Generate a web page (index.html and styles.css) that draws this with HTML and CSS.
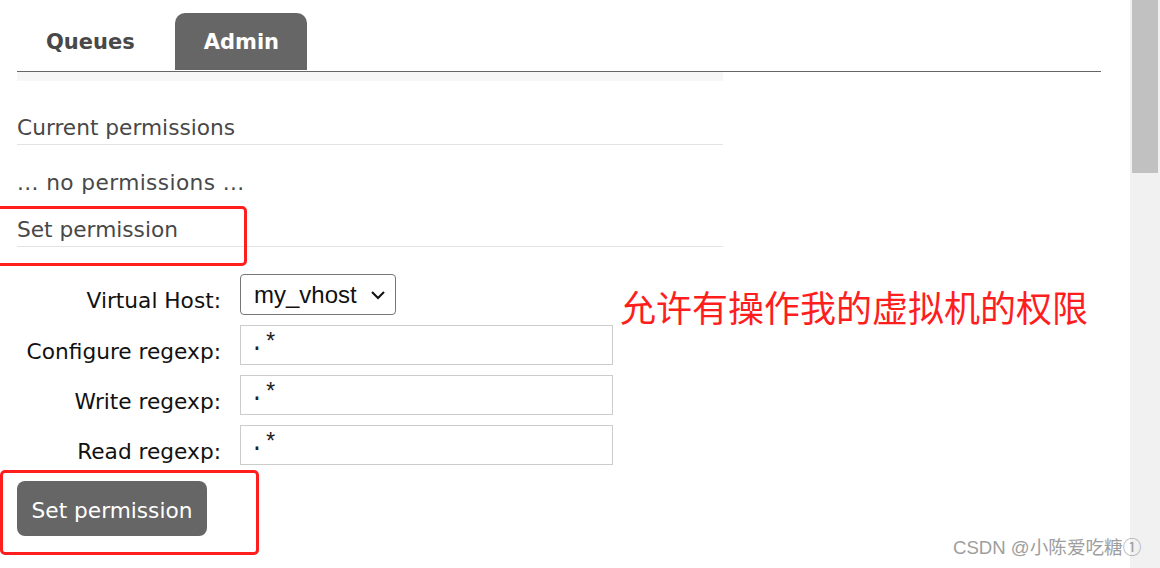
FILE: index.html
```html
<!DOCTYPE html>
<html lang="en">
<head>
    <meta charset="UTF-8">
    <title>RabbitMQ - User permissions</title>
    <link rel="stylesheet" href="styles.css">
</head>
<body>
    <div class="window">
        <div class="main">
            <ul class="tabs">
                <li class="tab">Queues</li>
                <li class="tab active">Admin</li>
            </ul>
            <div class="band"></div>

            <div class="section">
                <h2>Current permissions</h2>
                <p class="empty">... no permissions ...</p>

                <h2>Set permission</h2>
                <form class="perm-form" onsubmit="return false;">
                    <label for="vhost">Virtual Host:</label>
                    <span class="select-wrap">
                        <select id="vhost" name="vhost">
                            <option>my_vhost</option>
                        </select>
                        <svg class="chevron" width="16" height="10" viewBox="0 0 16 10" fill="none">
                            <path d="M2 2L8 8L14 2" stroke="#111" stroke-width="2"/>
                        </svg>
                    </span>

                    <label for="configure">Configure regexp:</label>
                    <input type="text" id="configure" value=".*">

                    <label for="write">Write regexp:</label>
                    <input type="text" id="write" value=".*">

                    <label for="read">Read regexp:</label>
                    <input type="text" id="read" value=".*">
                </form>
                <button class="btn" type="button">Set permission</button>
            </div>

            <!-- annotations drawn over the screenshot -->
            <div class="mark mark-heading"></div>
            <div class="mark mark-button"></div>
            <div class="note">允许有操作我的虚拟机的权限</div>
        </div>
        <div class="scrollbar">
            <div class="thumb"></div>
        </div>
        <div class="watermark">CSDN @小陈爱吃糖①</div>
    </div>
</body>
</html>
```

FILE: styles.css
```css
html, body {
    margin: 0;
    padding: 0;
    background: #fff;
}
body {
    font-family: "DejaVu Sans", Verdana, sans-serif;
    color: #484848;
    overflow: hidden;
}
.window {
    position: relative;
    display: flex;
    width: 1160px;
    height: 568px;
}
.main {
    position: relative;
    flex: 1;
    padding: 0 29px 0 17px;
    overflow: hidden;
}
.scrollbar {
    width: 30px;
    background: #f1f1f1;
    padding: 0 2px;
    box-sizing: border-box;
}
.thumb {
    height: 173px;
    background: #c1c1c1;
}

/* tabs */
.tabs {
    display: flex;
    gap: 12px;
    list-style: none;
    margin: 13px 0 0 0;
    padding: 0;
    height: 58px;
    border-bottom: 1px solid #666;
    box-sizing: content-box;
}
.tab {
    height: 57px;
    line-height: 58px;
    padding: 0 28px 0 29px;
    font-size: 21px;
    font-weight: bold;
    color: #484848;
    border-radius: 10px 10px 0 0;
}
.tab.active {
    background: #666;
    color: #fff;
}
.band {
    width: 706px;
    height: 9px;
    background: #f7f7f7;
}

/* content */
.section {
    width: 706px;
}
h2 {
    margin: 33px 0 0 0;
    padding-bottom: 2px;
    font-size: 21.7px;
    font-weight: normal;
    line-height: 28px;
    color: #484848;
    border-bottom: 1px solid #e3e3e3;
}
.empty {
    margin: 24px 0 0 0;
    font-size: 21.7px;
    letter-spacing: 0.4px;
    line-height: 28px;
}
.empty + h2 {
    margin-top: 19px;
}
.perm-form {
    display: grid;
    grid-template-columns: 204px auto;
    column-gap: 19px;
    row-gap: 10px;
    align-items: center;
    justify-items: start;
    margin-top: 27px;
}
.perm-form label {
    justify-self: end;
    font-size: 21.7px;
    color: #111;
    padding-top: 12px;
}
.select-wrap {
    position: relative;
    display: inline-block;
}
.select-wrap select {
    appearance: none;
    -webkit-appearance: none;
    width: 156px;
    height: 41px;
    padding: 0 0 1px 13px;
    border: 1px solid #767676;
    border-radius: 4px;
    background: #fff;
    font-family: "Liberation Sans", Arial, sans-serif;
    font-size: 24px;
    color: #111;
}
.chevron {
    position: absolute;
    right: 10px;
    top: 16px;
    pointer-events: none;
}
.perm-form input {
    width: 373px;
    height: 40px;
    box-sizing: border-box;
    padding: 0 10px 3px 9px;
    border: 1px solid #ccc;
    font-family: "Liberation Mono", monospace;
    font-size: 23px;
    color: #222;
}
.btn {
    margin-top: 16px;
    width: 190px;
    height: 55px;
    border: none;
    border-radius: 8px;
    background: #666;
    color: #fff;
    font-family: "DejaVu Sans", Verdana, sans-serif;
    font-size: 21.7px;
    padding: 3px 0 0 0;
}

/* annotations */
.mark {
    position: absolute;
    border: 3px solid #fe1e1e;
    border-radius: 5px;
    box-sizing: border-box;
}
.mark-heading {
    left: -10px;
    top: 206px;
    width: 257px;
    height: 60px;
}
.mark-button {
    left: 0;
    top: 470px;
    width: 259px;
    height: 85px;
}
.note {
    position: absolute;
    left: 620px;
    top: 283px;
    font-family: "Noto Sans CJK SC", sans-serif;
    font-size: 36px;
    line-height: 46px;
    color: #fe1e1e;
    white-space: nowrap;
}
.watermark {
    position: absolute;
    left: 953px;
    top: 536px;
    font-family: "Liberation Sans", "Noto Sans CJK SC", sans-serif;
    font-size: 18.6px;
    line-height: 24px;
    color: #9e9e9e;
    white-space: nowrap;
}
```
